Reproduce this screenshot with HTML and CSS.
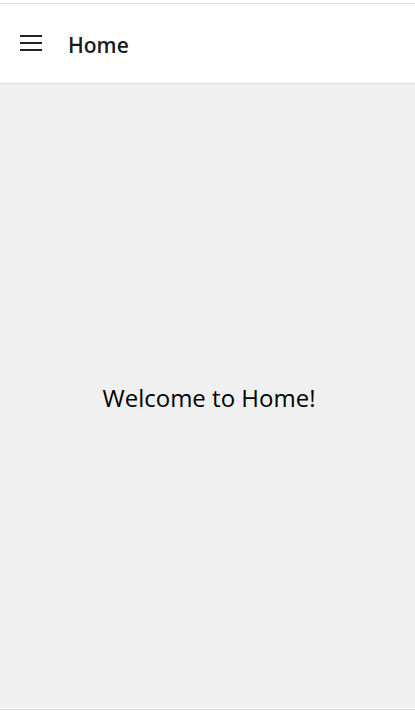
FILE: index.html
```html
<!DOCTYPE html>
<html lang="en">
<head>
<meta charset="utf-8">
<title>Home</title>
<link rel="stylesheet" href="styles.css">
</head>
<body>
<div class="app">
  <header class="app-bar">
    <button class="menu-btn" aria-label="Menu">
      <svg width="22" height="16" viewBox="0 0 22 16" shape-rendering="crispEdges" aria-hidden="true">
        <rect x="0" y="0" width="22" height="2" fill="#222222"/>
        <rect x="0" y="7" width="22" height="2" fill="#222222"/>
        <rect x="0" y="14" width="22" height="2" fill="#222222"/>
      </svg>
    </button>
    <h1 class="title">Home</h1>
  </header>
  <main class="content">
    <p class="welcome">Welcome to Home!</p>
  </main>
  <div class="footer-line"></div>
</div>
</body>
</html>
```

FILE: styles.css
```css
html, body {
  margin: 0;
  padding: 0;
  background: #ffffff;
}

body {
  font-family: "Open Sans", "Noto Sans", "Liberation Sans", sans-serif;
  color: #111111;
}

.app {
  display: flex;
  flex-direction: column;
  height: 711px;
  padding-top: 3px;
  box-sizing: border-box;
}

.app-bar {
  display: flex;
  align-items: center;
  height: 81px;
  box-sizing: border-box;
  border-top: 1px solid #dcdcdc;
  border-bottom: 1px solid #dcdcdc;
  background: #ffffff;
  padding-left: 20px;
}

.menu-btn {
  display: block;
  border: 0;
  background: transparent;
  padding: 0;
  margin: -1px 26px 0 0;
  width: 22px;
  height: 16px;
  cursor: pointer;
}

.menu-btn svg {
  display: block;
}

.title {
  margin: 0 0 -2px 0;
  font-size: 21px;
  font-weight: 600;
  color: #1a1a1a;
}

.content {
  flex: 1;
  display: flex;
  align-items: center;
  justify-content: center;
  background: #f0f0f0;
  border-bottom: 1px solid #ffffff;
}

.welcome {
  margin: 0 0 0 3px;
  font-size: 24px;
  font-weight: 400;
  color: #000000;
  padding-top: 2px;
}

.footer-line {
  height: 2px;
  border-top: 1px solid #dcdcdc;
  box-sizing: border-box;
}
```
